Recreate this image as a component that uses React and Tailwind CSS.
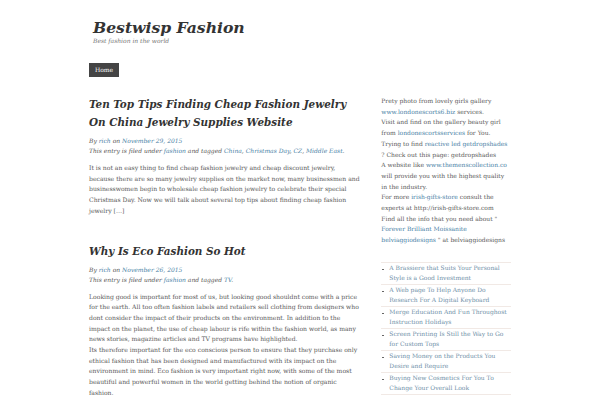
const posts = [
  {
    title: 'Ten Top Tips Finding Cheap Fashion Jewelry On China Jewelry Supplies Website',
    date: 'November 29, 2015',
    tags: ['China', 'Christmas Day', 'CZ', 'Middle East'],
    body: [
      'It is not an easy thing to find cheap fashion jewelry and cheap discount jewelry, because there are so many jewelry supplies on the market now, many businessmen and businesswomen begin to wholesale cheap fashion jewelry to celebrate their special Christmas Day. Now we will talk about several top tips about finding cheap fashion jewelry […]',
    ],
  },
  {
    title: 'Why Is Eco Fashion So Hot',
    date: 'November 26, 2015',
    tags: ['TV'],
    body: [
      'Looking good is important for most of us, but looking good shouldnt come with a price for the earth. All too often fashion labels and retailers sell clothing from designers who dont consider the impact of their products on the environment. In addition to the impact on the planet, the use of cheap labour is rife within the fashion world, as many news stories, magazine articles and TV programs have highlighted.',
      'Its therefore important for the eco conscious person to ensure that they purchase only ethical fashion that has been designed and manufactured with its impact on the environment in mind. Eco fashion is very important right now, with some of the most beautiful and powerful women in the world getting behind the notion of organic fashion.',
    ],
  },
]

const recent = [
  'A Brassiere that Suits Your Personal Style is a Good Investment',
  'A Web page To Help Anyone Do Research For A Digital Keyboard',
  'Merge Education And Fun Throughost Instruction Holidays',
  'Screen Printing Is Still the Way to Go for Custom Tops',
  'Saving Money on the Products You Desire and Require',
  'Buying New Cosmetics For You To Change Your Overall Look',
]

function A({ children }) {
  return <a className="text-[#4a82a6]">{children}</a>
}

function Post({ post, first }) {
  return (
    <div className={first ? '' : 'mt-[25px]'}>
      <h2 className="text-[10.4px] leading-[18px] font-bold italic text-[#333]">{post.title}</h2>
      <div className="mt-[5px] text-[6px] leading-[10px] italic text-[#555]">
        <div>
          By <A>rich</A> on <A>{post.date}</A>
        </div>
        <div>
          This entry is filed under <A>fashion</A> and tagged{' '}
          {post.tags.map((t, i) => (
            <span key={t}>
              <A>{t}</A>
              {i < post.tags.length - 1 ? ', ' : ''}
            </span>
          ))}
          .
        </div>
      </div>
      <div className="mt-[7px] text-[6.1px] leading-[10.7px] text-[#5a5a5a]">
        {post.body.map((p, i) => (
          <p key={i}>{p}</p>
        ))}
      </div>
    </div>
  )
}

export default function App() {
  return (
    <div className="min-h-[400px] bg-white" style={{ fontFamily: '"DejaVu Serif", serif' }}>
      <div className="w-[422px] mx-auto">
        {/* Header */}
        <div className="pt-[19px] pl-[4px]">
          <h1 className="text-[15.6px] leading-[18px] font-bold italic text-[#333]">Bestwisp Fashion</h1>
          <div className="text-[6px] leading-[7px] italic text-[#777]">Best fashion in the world</div>
        </div>
        <div className="mt-[19px] flex">
          <span className="bg-[#444] text-white text-[6px] leading-[14px] px-[6px]">Home</span>
        </div>

        <div className="mt-[18px] flex">
          {/* Main */}
          <div className="w-[272px] mr-[21px]">
            {posts.map((p, i) => (
              <Post key={i} post={p} first={i === 0} />
            ))}
          </div>

          {/* Sidebar */}
          <div className="w-[130px] pt-[1px] text-[6px] text-[#5a5a5a]">
            <div className="leading-[10.7px] whitespace-nowrap">
              <div>Prety photo from lovely girls gallery</div>
              <div><A>www.londonescorts6.biz</A> services.</div>
              <div>Visit and find on the gallery beauty girl</div>
              <div>from <A>londonescortsservices</A> for You.</div>
              <div>Trying to find <A>reactive led getdropshades</A></div>
              <div>? Check out this page: getdropshades</div>
              <div>A website like <A>www.themenscollection.co</A></div>
              <div>will provide you with the highest quality</div>
              <div>in the industry.</div>
              <div>For more <A>irish-gifts-store</A> consult the</div>
              <div>experts at http://irish-gifts-store.com</div>
              <div>Find all the info that you need about "</div>
              <div><A>Forever Brilliant Moissanite</A></div>
              <div><A>belviaggiodesigns</A> " at belviaggiodesigns</div>
            </div>

            <ul className="mt-[16px] border-t border-[#f1e9e5]">
              {recent.map((r) => (
                <li key={r} className="flex border-b border-[#f1e9e5]">
                  <span className="w-[8px] shrink-0 flex">
                    <span className="mt-[6px] ml-[1px] w-[1.5px] h-[1.5px] bg-[#666]"></span>
                  </span>
                  <a className="leading-[10.5px] text-[#6f90a8]">{r}</a>
                </li>
              ))}
            </ul>
          </div>
        </div>
      </div>
    </div>
  )
}
